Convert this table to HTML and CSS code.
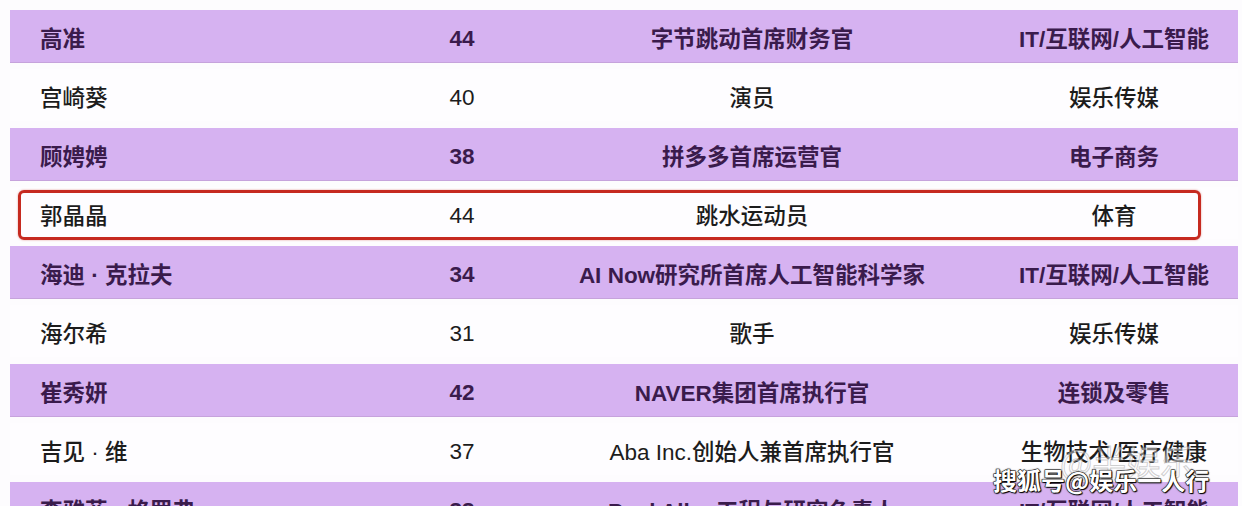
FILE: index.html
```html
<!DOCTYPE html>
<html lang="zh-CN">
<head>
<meta charset="utf-8">
<link rel="stylesheet" href="styles.css">
</head>
<body>
<div class="page">
  <div class="table">
    <div class="row purple"><div class="c name">高准</div><div class="c age">44</div><div class="c title">字节跳动首席财务官</div><div class="c ind">IT/互联网/人工智能</div></div>
    <div class="row white"><div class="c name">宫崎葵</div><div class="c age">40</div><div class="c title">演员</div><div class="c ind">娱乐传媒</div></div>
    <div class="row purple"><div class="c name">顾娉娉</div><div class="c age">38</div><div class="c title">拼多多首席运营官</div><div class="c ind">电子商务</div></div>
    <div class="row white highlight"><div class="c name">郭晶晶</div><div class="c age">44</div><div class="c title">跳水运动员</div><div class="c ind">体育</div></div>
    <div class="row purple"><div class="c name">海迪 · 克拉夫</div><div class="c age">34</div><div class="c title">AI Now研究所首席人工智能科学家</div><div class="c ind">IT/互联网/人工智能</div></div>
    <div class="row white"><div class="c name">海尔希</div><div class="c age">31</div><div class="c title">歌手</div><div class="c ind">娱乐传媒</div></div>
    <div class="row purple"><div class="c name">崔秀妍</div><div class="c age">42</div><div class="c title">NAVER集团首席执行官</div><div class="c ind">连锁及零售</div></div>
    <div class="row white"><div class="c name">吉见 · 维</div><div class="c age">37</div><div class="c title">Aba Inc.创始人兼首席执行官</div><div class="c ind">生物技术/医疗健康</div></div>
    <div class="row purple"><div class="c name">李雅菲 · 格罗弗</div><div class="c age">33</div><div class="c title">Paul Allen工程与研究负责人</div><div class="c ind">IT/互联网/人工智能</div></div>
  </div>
  <div class="ghost">@半娱乐</div>
  <div class="mark">搜狐号@娱乐一人行</div>
</div>
</body>
</html>
```
FILE: styles.css
```css
html, body {
  margin: 0;
  padding: 0;
  background: #fdfcfe;
}
.page {
  position: relative;
  width: 1242px;
  height: 506px;
  overflow: hidden;
  font-family: "Liberation Sans", "Noto Sans CJK SC", sans-serif;
}
.table {
  display: flex;
  flex-direction: column;
  gap: 7px;
  padding: 10px 4px 0 10px;
}
.row {
  position: relative;
  display: grid;
  grid-template-columns: 372px 160px 420px 1fr;
  align-items: center;
  height: 52px;
  font-size: 22.5px;
  flex-shrink: 0;
}
.purple {
  background: #d6b2f1;
  color: #3a1b4c;
  font-weight: bold;
  box-shadow: 0 1px 0 #c6a3dc;
}
.white {
  background: #fefdff;
  color: #1c1c1c;
  font-weight: 500;
}
.c { white-space: nowrap; padding-top: 2px; }
.name { padding-left: 30px; }
.age, .title { text-align: center; }
.age { padding-top: 6px; }
.ind {
  text-align: center;
  padding-left: 38px;
  padding-right: 10px;
}
.highlight::after {
  content: "";
  position: absolute;
  left: 8px;
  top: 3px;
  width: 1177px;
  height: 44px;
  border: 3px solid #c62a20;
  border-radius: 6px;
  box-shadow: 0 0 2px rgba(200, 40, 30, 0.5);
}
.mark {
  position: absolute;
  left: 993px;
  top: 462px;
  font-family: "Noto Sans CJK SC", sans-serif;
  font-weight: bold;
  font-size: 24px;
  color: #ffffff;
  -webkit-text-stroke: 1px #222;
  paint-order: stroke fill;
  text-shadow: 0 0 2px #000, 1px 1px 1px #000;
}
.ghost {
  position: absolute;
  left: 1060px;
  top: 436px;
  font-family: "Noto Sans CJK SC", sans-serif;
  font-size: 34px;
  color: rgba(255, 255, 255, 0.45);
  -webkit-text-stroke: 1px rgba(120, 120, 120, 0.35);
}
```
